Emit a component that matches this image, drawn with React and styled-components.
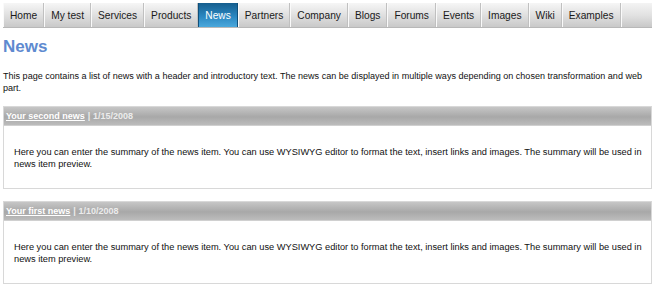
import React from 'react';
import styled, { createGlobalStyle } from 'styled-components';

const tabs = ['Home', 'My test', 'Services', 'Products', 'News', 'Partners', 'Company', 'Blogs', 'Forums', 'Events', 'Images', 'Wiki', 'Examples'];

const news = [
  { title: 'Your second news', date: '1/15/2008' },
  { title: 'Your first news', date: '1/10/2008' },
];

const summary = 'Here you can enter the summary of the news item. You can use WYSIWYG editor to format the text, insert links and images. The summary will be used in news item preview.';

export default function App() {
  return (
    <>
      <GlobalStyle />
      <Page>
        <Menu>
          {tabs.map((t) => (
            <Tab key={t} $active={t === 'News'}>{t}</Tab>
          ))}
          <MenuFill />
        </Menu>
        <Title>News</Title>
        <Intro>
          This page contains a list of news with a header and introductory text. The news can be displayed in multiple ways depending on chosen transformation and web part.
        </Intro>
        {news.map((n) => (
          <NewsBox key={n.title}>
            <NewsHeader>
              <a href="#">{n.title}</a>
              <span>| {n.date}</span>
            </NewsHeader>
            <NewsBody>{summary}</NewsBody>
          </NewsBox>
        ))}
      </Page>
    </>
  );
}

const GlobalStyle = createGlobalStyle`
  body {
    margin: 0;
    background: #fff;
    font-family: 'Liberation Sans', Arial, sans-serif;
  }
`;

const Page = styled.div`
  padding: 3px 1px 0 3px;
`;

const Menu = styled.div`
  display: flex;
  height: 24px;
  margin-right: 3px;
  background: linear-gradient(#f4f4f4, #e2e2e2 50%, #c8c8c8);
  border-bottom: 1px solid #b8b8b8;
`;

const Tab = styled.div`
  display: flex;
  align-items: center;
  padding: 0 6px;
  white-space: nowrap;
  font-size: 10.2px;
  color: ${(p) => (p.$active ? '#fff' : '#1a1a1a')};
  background: ${(p) => (p.$active
    ? 'linear-gradient(#155e8e, #2a86c0 55%, #4aa8dc)'
    : 'linear-gradient(#f6f6f6, #e0e0e0 50%, #c9c9c9)')};
  border-right: 1px solid ${(p) => (p.$active ? '#0f4f7a' : '#c0c0c0')};
  border-left: 1px solid ${(p) => (p.$active ? '#0f4f7a' : '#fafafa')};
`;

const MenuFill = styled.div`
  flex: 1;
  border-left: 1px solid #fafafa;
`;

const Title = styled.h1`
  margin: 8px 0 0 0;
  font-size: 17px;
  line-height: 21px;
  font-weight: bold;
  color: #5e8ad0;
`;

const Intro = styled.p`
  margin: 13px 0 12px 0;
  font-size: 9.05px;
  line-height: 12px;
  color: #111;
`;

const NewsBox = styled.div`
  border: 1px solid #d8d8d8;
  margin: 0 3px 12px 0;
`;

const NewsHeader = styled.div`
  height: 18px;
  display: flex;
  align-items: center;
  gap: 3px;
  padding-left: 2px;
  font-size: 9px;
  font-weight: bold;
  color: #ececec;
  background: linear-gradient(#c6c6c6, #a8a8a8 55%, #bcbcbc);
  border-bottom: 1px solid #d0d0d0;
  a {
    color: #fff;
    text-decoration: underline;
  }
`;

const NewsBody = styled.div`
  padding: 20px 4px 18px 10px;
  font-size: 9.25px;
  line-height: 12px;
  color: #111;
`;
